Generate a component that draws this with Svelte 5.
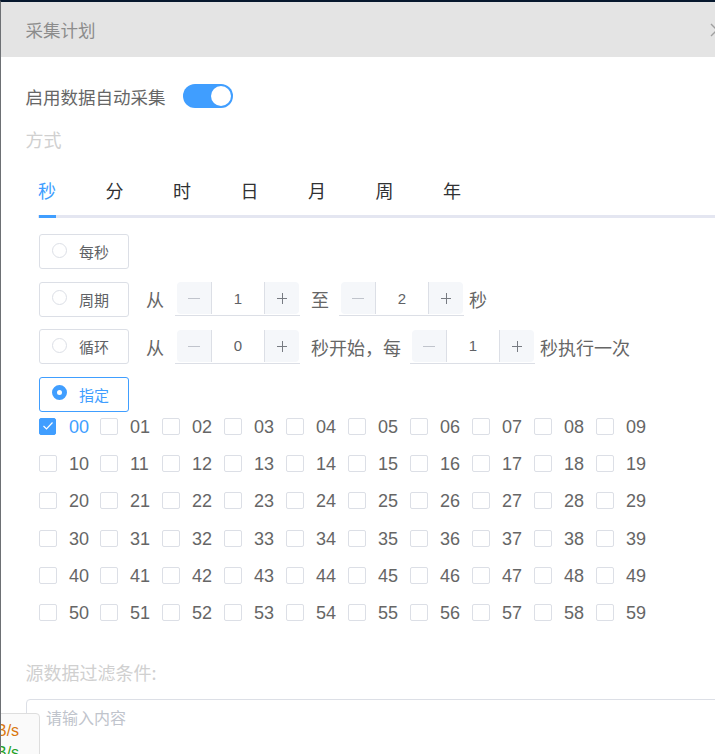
<script>
  const tabs = ['秒', '分', '时', '日', '月', '周', '年'];
  const seconds = Array.from({ length: 60 }, (_, i) => String(i).padStart(2, '0'));
  let enabled = $state(true);
  let activeTab = $state(0);
  let picked = $state(['00']);

  function toggleSecond(s) {
    picked = picked.includes(s) ? picked.filter((v) => v !== s) : [...picked, s];
  }
</script>

{#snippet stepper(value)}
  <div class="stepper">
    <span class="step minus">
      <svg width="14" height="14" viewBox="0 0 14 14" aria-hidden="true">
        <path d="M1 7.5h12" stroke="#c0c4cc" stroke-width="1" />
      </svg>
    </span>
    <span class="value">{value}</span>
    <span class="step plus">
      <svg width="14" height="14" viewBox="0 0 14 14" aria-hidden="true">
        <path d="M2 7.5h10M7.5 2v11" fill="none" stroke="#777b82" stroke-width="1" />
      </svg>
    </span>
  </div>
{/snippet}

{#snippet mode(label, checked)}
  <div class="mode" class:checked>
    <span class="radio"></span>
    <span>{label}</span>
  </div>
{/snippet}

<div class="page">
  <div class="dialog">
    <header class="head">
      <span>采集计划</span>
      <svg class="close" width="14" height="14" viewBox="0 0 14 14" aria-hidden="true">
        <path d="M1 1l12 12M13 1L1 13" fill="none" stroke="#a0a0a0" stroke-width="1.4" />
      </svg>
    </header>

    <div class="body">
      <div class="enable">
        <span>启用数据自动采集</span>
        <button class="switch" class:on={enabled} onclick={() => (enabled = !enabled)} aria-label="启用"></button>
      </div>

      <div class="section">方式</div>

      <div class="tabs">
        {#each tabs as tab, i}
          <button class="tab" class:active={i === activeTab} onclick={() => (activeTab = i)}>{tab}</button>
        {/each}
      </div>

      <div class="rows">
        <div class="row">{@render mode('每秒', false)}</div>
        <div class="row">
          {@render mode('周期', false)}
          <span class="txt first">从</span>
          {@render stepper(1)}
          <span class="txt">至</span>
          {@render stepper(2)}
          <span class="txt tail">秒</span>
        </div>
        <div class="row">
          {@render mode('循环', false)}
          <span class="txt first">从</span>
          {@render stepper(0)}
          <span class="txt tight">秒开始，每</span>
          {@render stepper(1)}
          <span class="txt tail">秒执行一次</span>
        </div>
        <div class="row">{@render mode('指定', true)}</div>
      </div>

      <div class="grid">
        {#each seconds as s}
          {@const on = picked.includes(s)}
          <button class="cell" class:on onclick={() => toggleSecond(s)}>
            <span class="box">
              {#if on}
                <svg width="12" height="10" viewBox="0 0 12 10" aria-hidden="true">
                  <path d="M1.5 5l3 3 6-6.5" fill="none" stroke="#fff" stroke-width="1.2" />
                </svg>
              {/if}
            </span>
            <span>{s}</span>
          </button>
        {/each}
      </div>

      <div class="section filter">源数据过滤条件:</div>
      <div class="textarea">请输入内容</div>
    </div>
  </div>

  <div class="speed">
    <div class="up">B/s</div>
    <div class="down">B/s</div>
  </div>
</div>

<style>
  :global(body) {
    margin: 0;
    overflow: hidden;
  }

  .page {
    position: relative;
    width: 715px;
    height: 754px;
    overflow: hidden;
    box-sizing: border-box;
    border-top: 2px solid #06182e;
    border-left: 1px solid #6d7074;
    font-family: "Noto Sans CJK SC", "Liberation Sans", sans-serif;
    color: #606266;
  }

  .dialog {
    width: 780px;
    height: 752px;
    background: #fff;
  }

  .head {
    display: flex;
    align-items: center;
    justify-content: space-between;
    box-sizing: border-box;
    height: 55px;
    padding: 0 57px 0 24.5px;
    background: #e4e4e4;
    font-size: 17.5px;
    color: #8c8c8c;
  }

  .body {
    padding-left: 25px;
  }

  .enable {
    display: flex;
    align-items: center;
    gap: 17.5px;
    height: 24px;
    margin: 27px 0 0 -0.5px;
    font-size: 17.5px;
    color: #666;
  }

  .switch {
    position: relative;
    width: 50px;
    height: 24px;
    padding: 0;
    border: 0;
    border-radius: 12px;
    background: #dcdfe6;
  }

  .switch.on {
    background: #409eff;
  }

  .switch::after {
    content: "";
    position: absolute;
    top: 2px;
    left: 2px;
    width: 20px;
    height: 20px;
    border-radius: 50%;
    background: #fff;
  }

  .switch.on::after {
    left: 28px;
  }

  .section {
    height: 26px;
    margin: 18px 0 0 -0.5px;
    font-size: 18px;
    line-height: 26px;
    color: #d0d0d0;
  }

  .tabs {
    display: flex;
    gap: 49.5px;
    box-sizing: border-box;
    height: 49px;
    margin: 17px 0 0 12px;
    border-bottom: 3px solid #e4e6f1;
  }

  .tab {
    position: relative;
    width: 18px;
    height: 46px;
    padding: 0 0 4px;
    border: 0;
    background: none;
    font: inherit;
    font-size: 18px;
    color: #303133;
  }

  .tab.active {
    color: #409eff;
  }

  .tab.active::after {
    content: "";
    position: absolute;
    left: 1px;
    right: 0;
    bottom: -3px;
    height: 3px;
    background: #409eff;
  }

  .rows {
    display: flex;
    flex-direction: column;
    gap: 12.5px;
    margin: 16px 0 0 13px;
  }

  .row {
    display: flex;
    align-items: center;
    height: 35px;
    font-size: 18px;
  }

  .mode {
    display: flex;
    align-items: center;
    gap: 12px;
    box-sizing: border-box;
    width: 90px;
    height: 35px;
    padding-left: 12px;
    border: 1px solid #dcdfe6;
    border-radius: 3px;
    font-size: 15px;
    color: #606266;
  }

  .mode.checked {
    border-color: #409eff;
    color: #409eff;
  }

  .radio {
    box-sizing: border-box;
    width: 15px;
    height: 15px;
    margin-top: -3px;
    border: 1px solid #dcdfe6;
    border-radius: 50%;
    background: #fff;
  }

  .checked .radio {
    border: 5px solid #409eff;
  }

  .txt {
    margin: 0 10px 0 11px;
    white-space: nowrap;
    color: #666;
  }

  .txt.first {
    margin: 0 11px 0 17px;
  }

  .txt.tight {
    margin-right: 9px;
  }

  .txt.tail {
    margin: 0 0 0 5px;
  }

  .stepper {
    display: flex;
    box-sizing: border-box;
    width: 125px;
    height: 34px;
    padding: 0 1px 1px 2px;
    border-bottom: 1px solid #dcdfe6;
    font-family: "Liberation Sans", sans-serif;
  }

  .step {
    display: flex;
    align-items: center;
    justify-content: center;
    width: 34px;
    background: #f5f7fa;
  }

  .minus {
    border-right: 1px solid #dcdfe6;
    border-radius: 4px 0 0 4px;
  }

  .plus {
    border-left: 1px solid #dcdfe6;
    border-radius: 0 4px 4px 0;
  }

  .value {
    flex: 1;
    align-self: center;
    text-align: center;
    font-size: 15px;
    color: #606266;
  }

  .grid {
    display: grid;
    grid-template-columns: 61px repeat(9, 62px);
    grid-auto-rows: 37.4px;
    margin: 5px 0 0 13px;
  }

  .cell {
    display: flex;
    align-items: flex-start;
    gap: 12px;
    padding: 0;
    border: 0;
    background: none;
    font-family: "Liberation Sans", sans-serif;
    font-size: 18px;
    line-height: 20px;
    color: #666;
    text-align: left;
  }

  .cell.on {
    color: #409eff;
  }

  .box {
    display: flex;
    align-items: center;
    justify-content: center;
    box-sizing: border-box;
    width: 18px;
    height: 17px;
    margin-top: 1px;
    border: 1px solid #dcdfe6;
    border-radius: 2px;
    background: #fff;
  }

  .cell:first-child .box {
    width: 17px;
    margin-right: 1px;
  }

  .on .box {
    border-color: #409eff;
    background: #409eff;
  }

  .section.filter {
    margin-top: 18px;
  }

  .textarea {
    box-sizing: border-box;
    height: 80px;
    margin-top: 14px;
    padding: 5px 19px;
    border: 1px solid #dcdfe6;
    border-radius: 4px;
    font-size: 16px;
    line-height: 24px;
    color: #c0c4cc;
  }

  .speed {
    position: absolute;
    left: -6px;
    top: 711px;
    box-sizing: border-box;
    width: 45px;
    height: 60px;
    padding: 6px 0 0 0;
    border: 1px solid #dedede;
    border-radius: 4px;
    background: #fafafa;
    font-family: "Liberation Sans", sans-serif;
    font-size: 16px;
    line-height: 22px;
  }

  .up {
    color: #d9770c;
  }

  .down {
    color: #22a11f;
  }
</style>
